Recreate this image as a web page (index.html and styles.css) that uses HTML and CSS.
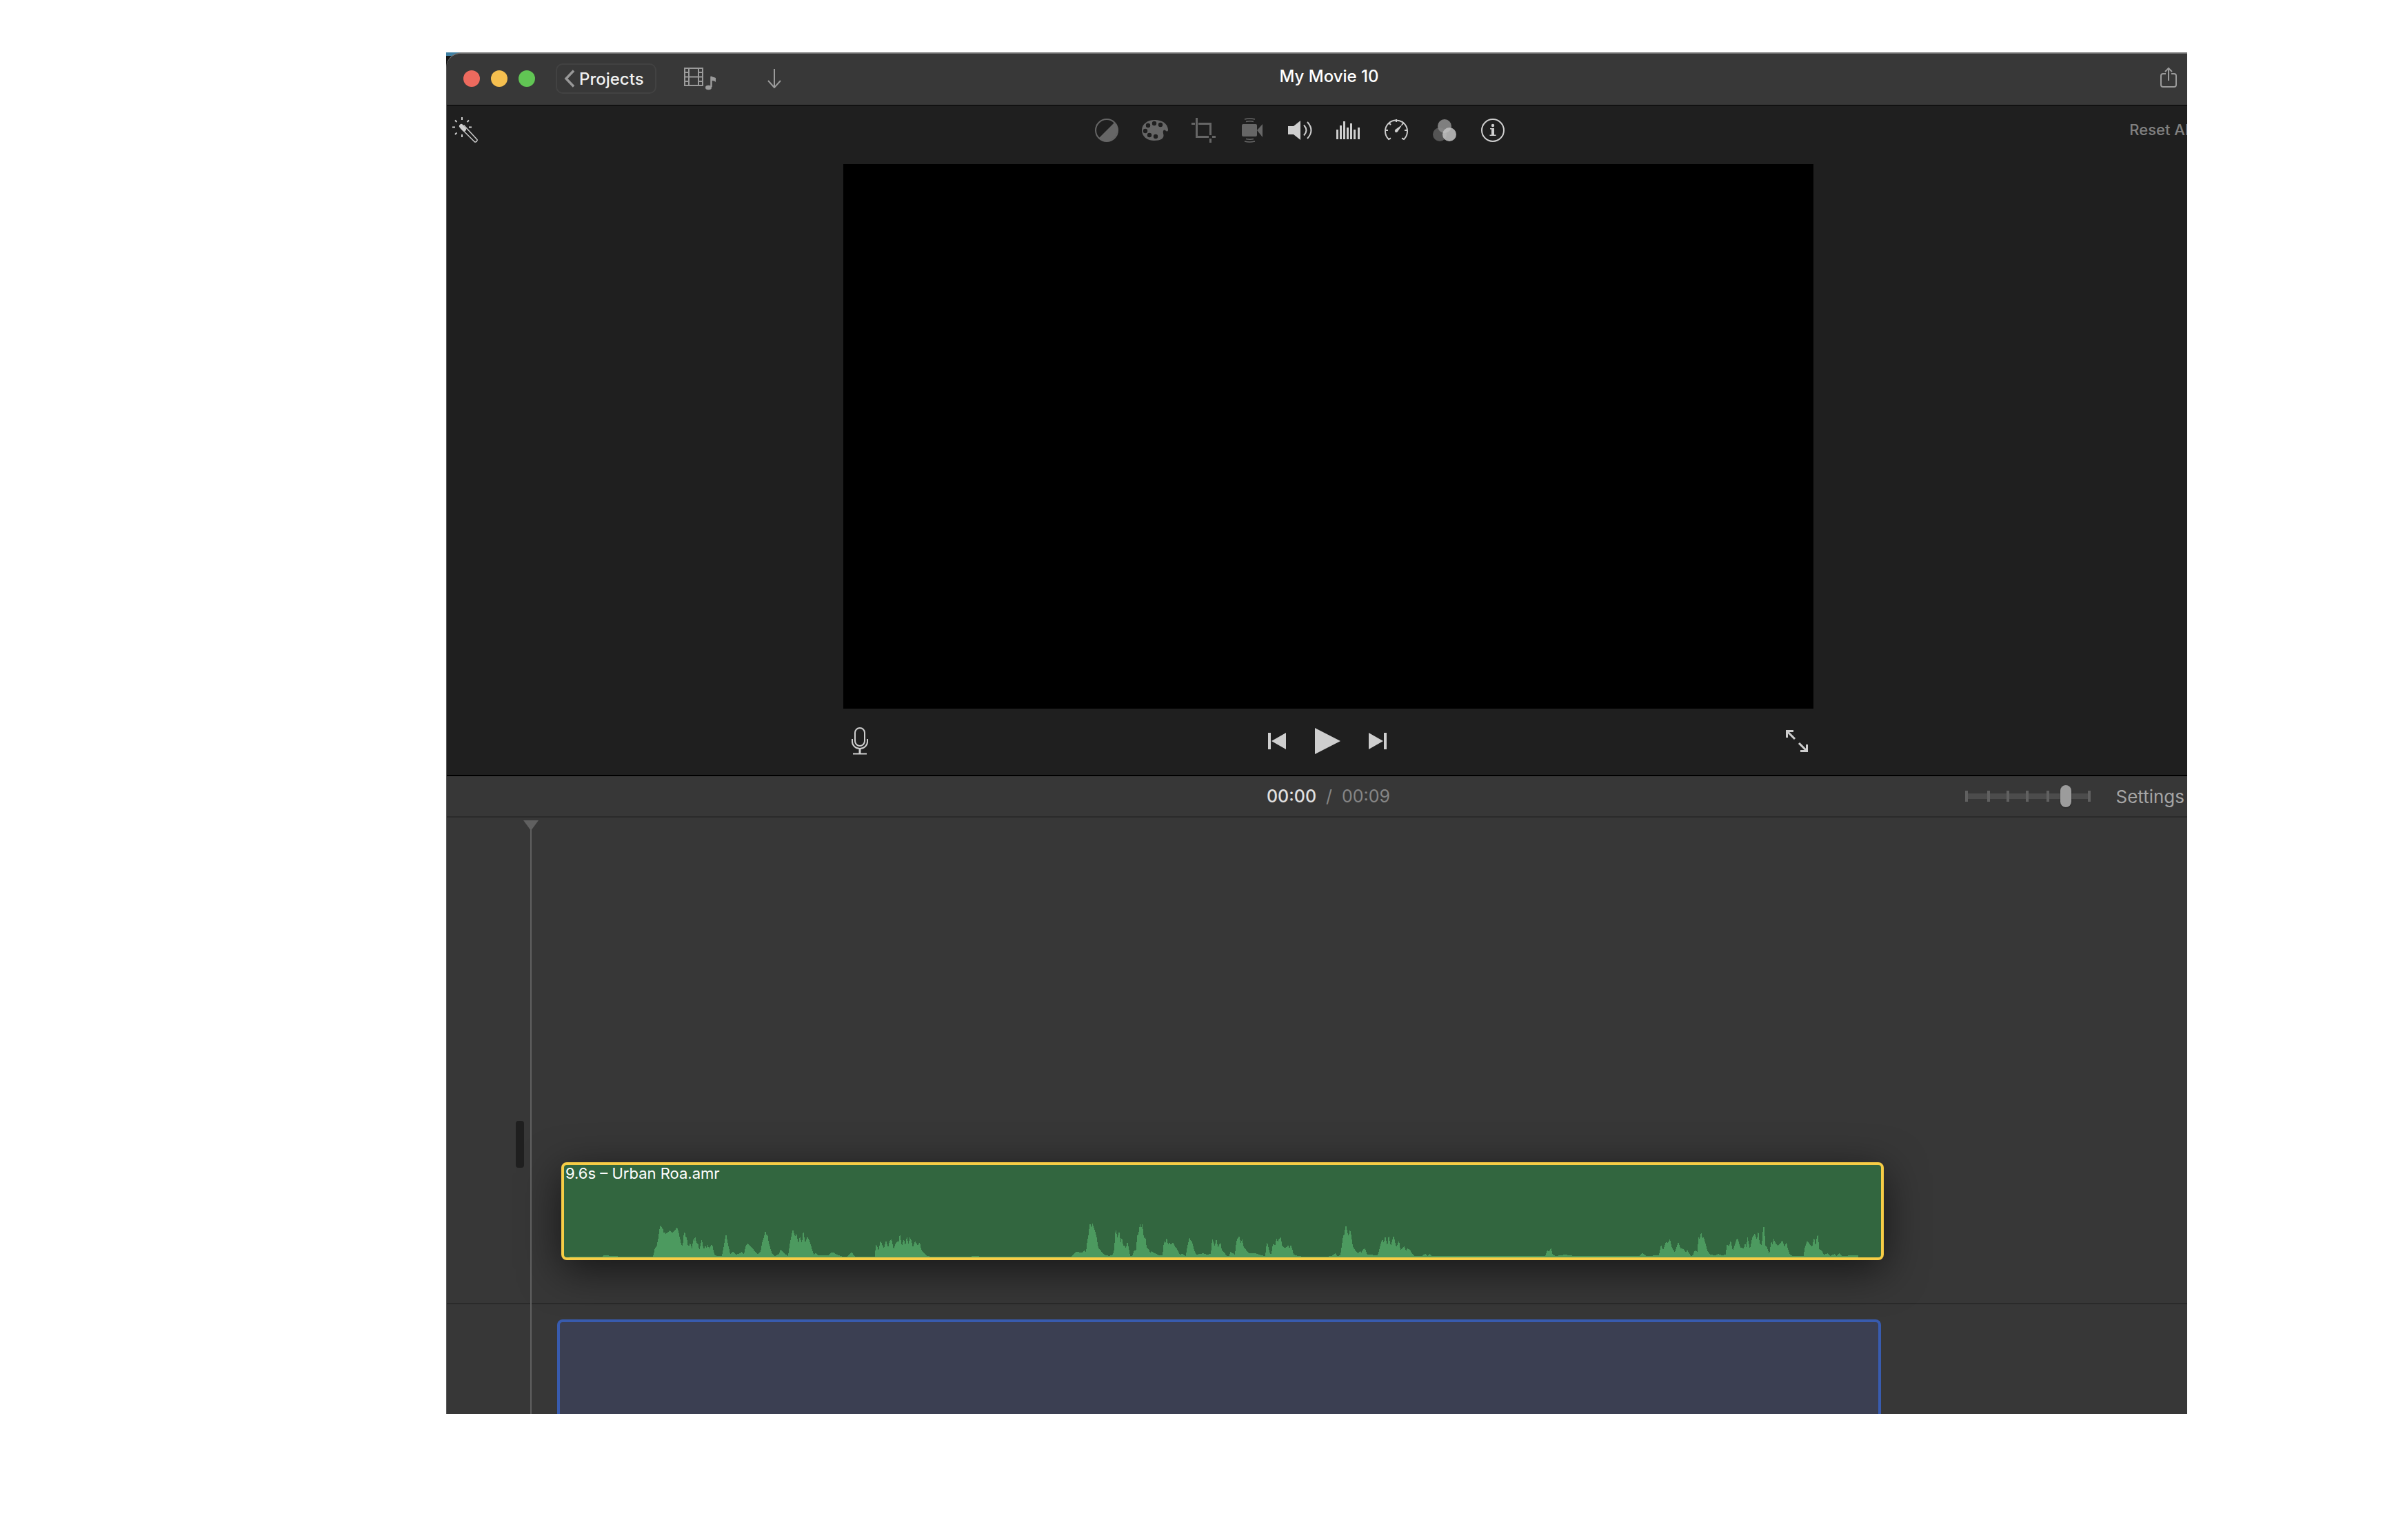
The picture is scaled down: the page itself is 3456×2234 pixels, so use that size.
FILE: index.html
```
<!DOCTYPE html>
<html lang="en">
<head>
  <meta charset="UTF-8" />
  <meta name="viewport" content="width=device-width, initial-scale=1.0"/>
  <title>My Movie 10</title>
  <link rel="stylesheet" href="styles.css">
</head>
<body>
  <div class="frame">
    <div class="app">

      <header class="titlebar">
        <div class="titlebar-left">
          <div class="lights">
            <button class="light close" aria-label="Close"></button>
            <button class="light minimize" aria-label="Minimize"></button>
            <button class="light zoom" aria-label="Zoom"></button>
          </div>
          <button class="projects-btn">
            <svg width="16" height="26" viewBox="0 0 16 26"><path d="M14 1.500L3 13l11 11.500" fill="none" stroke="#989898" stroke-width="3.500"/></svg>
            Projects
          </button>
          <button class="icon-btn media-btn" aria-label="Media">
            <svg width="48" height="34" viewBox="0 0 48 34" fill="none" stroke="#9b9b9b" stroke-width="2">
              <path d="M1 2h26v25H1zM7 2v25M21 2v25M7 14.500h14M1 8h6M1 14.500h6M1 21h6M21 8h6M21 14.500h6M21 21h6"/>
              <path d="M39.500 29V14.500" stroke-width="2.500"/>
              <path d="M38.500 13c2 2 5 1.500 7.500 3v6c-2-2-5-2-6-2z" fill="#9b9b9b" stroke="none"/>
              <ellipse cx="35.500" cy="30" rx="4.500" ry="3.200" fill="#9b9b9b" stroke="none"/>
            </svg>
          </button>
          <button class="icon-btn" aria-label="Import">
            <svg width="20" height="28" viewBox="0 0 20 28" fill="none" stroke="#9b9b9b" stroke-width="2"><path d="M10 0v26.500M1 17l9 10 9-10"/></svg>
          </button>
        </div>
        <h1 class="title">My Movie 10</h1>
        <div class="titlebar-right">
          <button class="icon-btn" aria-label="Share">
            <svg width="24" height="30" viewBox="0 0 24 30" fill="none" stroke="#9b9b9b" stroke-width="2"><path d="M8 10H4q-3 0-3 3v13q0 3 3 3h16q3 0 3-3V13q0-3-3-3h-4M12 20V2M7 7l5-5 5 5"/></svg>
          </button>
        </div>
      </header>

      <div class="adjust-bar">
        <button class="icon-btn wand" aria-label="Enhance">
          <svg width="38" height="38" viewBox="0 0 38 38" fill="none" stroke="#cecece" stroke-width="2">
            <path d="M14 0v4M0 14.500h4M24 14.500h4M14 25v4M4 4.500l2.500 2.500M24 4.500L21.500 7M4 25l2.500-2.500"/>
            <path d="M13 13l4 4.500" stroke-width="6" stroke-linecap="round"/>
            <path d="M12 15.500l20 20q2.500 1.500 4-1.500v-1.500L16.500 11.500" stroke-width="1.500"/>
          </svg>
        </button>
        <div class="adjust-tools">
          <button class="icon-btn" aria-label="Color balance">
            <svg width="36" height="36" viewBox="0 0 36 36"><circle cx="18" cy="18" r="16" fill="none" stroke="#666" stroke-width="2"/><path d="M29.500 6.500A16.300 16.300 0 0 1 6.500 29.500z" fill="#666"/></svg>
          </button>
          <button class="icon-btn" aria-label="Color correction">
            <svg width="36" height="36" viewBox="0 0 36 36">
              <path d="M18 3C7 3-1 9-1 18s8 15 18 15c9 0 14-3 13.500-8-.3-3-1.500-5 0-7 2-2 3.500 2 5 1.500 1.500 0 1.500-1 1.500-3C36 8 28 3 18 3z" fill="#666"/>
              <g fill="#1f1f1f"><circle cx="8" cy="11" r="3.200"/><circle cx="17" cy="8" r="3.200"/><circle cx="26" cy="10" r="3.200"/><circle cx="4" cy="19" r="3.200"/><circle cx="10" cy="25" r="3.200"/><circle cx="19" cy="27" r="3.200"/></g>
            </svg>
          </button>
          <button class="icon-btn" aria-label="Cropping">
            <svg width="36" height="36" viewBox="0 0 36 36" fill="none" stroke="#666" stroke-width="3"><path d="M1 8.500h5M8.500 0v27.500H26M11 8.500h17.500V25M28.500 30v6M28.500 24v1M31 27.500h5"/></svg>
          </button>
          <button class="icon-btn" aria-label="Stabilization">
            <svg width="36" height="36" viewBox="0 0 36 36"><rect x="4" y="9" width="22" height="18" rx="2" fill="#666"/><path d="M26 18l8-9v19z" fill="#666"/><path d="M8 2q7-2 15 0M10 5.500q6-1.500 11 0M10 30.500q6 1.500 11 0M8 34q7 2 15 0" fill="none" stroke="#666" stroke-width="1.500"/></svg>
          </button>
          <button class="icon-btn" aria-label="Volume">
            <svg width="36" height="36" viewBox="0 0 36 36"><path d="M1 12h8l10-8v28L9 24H1z" fill="#cecece"/><path d="M24 10.500q7 7.500 0 15M29 6q11 12 0 24" fill="none" stroke="#cecece" stroke-width="2"/></svg>
          </button>
          <button class="icon-btn" aria-label="Noise reduction and equalizer">
            <svg width="36" height="36" viewBox="0 0 36 36" fill="none" stroke="#cecece" stroke-width="3"><path d="M2.500 17v14M7.500 11v20M12.500 5v26M17.500 14v17M22.500 8v23M27.500 17v14M33.500 14v17"/></svg>
          </button>
          <button class="icon-btn" aria-label="Speed">
            <svg width="36" height="36" viewBox="0 0 36 36" fill="none" stroke="#cecece" stroke-width="2"><path d="M10 29.500l-3 1.500A16 16 0 1 1 29 31l-3-1.500"/><path d="M18 2v4M2 18h4M30 18h4M7 7l3 3M29 7l-3 3"/><path d="M27 9.500L20 20q-2 2-3.500.5t0-3.500z" fill="#cecece" stroke="none"/></svg>
          </button>
          <button class="icon-btn" aria-label="Video effect and audio effect">
            <svg width="36" height="36" viewBox="0 0 36 36"><circle cx="11" cy="24" r="10" fill="#555"/><circle cx="18" cy="12" r="10" fill="#8a8a8a" fill-opacity=".9"/><circle cx="25" cy="24" r="10" fill="#c4c4c4" fill-opacity=".85"/></svg>
          </button>
          <button class="icon-btn" aria-label="Clip information">
            <svg width="36" height="36" viewBox="0 0 36 36"><circle cx="18" cy="18" r="16" fill="none" stroke="#cecece" stroke-width="2"/><circle cx="18" cy="11" r="2.200" fill="#cecece"/><path d="M14 15h6v9.500h2.500V26h-9v-1.500H16v-8h-2z" fill="#cecece"/></svg>
          </button>
        </div>
        <button class="reset-btn">Reset All</button>
      </div>

      <section class="viewer">
        <div class="screen"></div>
        <div class="transport">
          <button class="icon-btn" aria-label="Record voiceover">
            <svg width="24" height="40" viewBox="0 0 24 40" fill="none" stroke="#cecece" stroke-width="2"><rect x="5" y="1" width="14" height="26" rx="7"/><path d="M1 17v4a11 10 0 0 0 22 0v-4"/><path d="M12 31v7" stroke-width="3"/><path d="M2 38.500h20"/></svg>
          </button>
          <div class="playback">
            <button class="icon-btn" aria-label="Previous">
              <svg width="26" height="24" viewBox="0 0 26 24" fill="#cecece"><path d="M0 0h4v24H0zM26 0v24L5 12z"/></svg>
            </button>
            <button class="icon-btn" aria-label="Play">
              <svg width="38" height="38" viewBox="0 0 38 38" fill="#cecece"><path d="M1 0l37 19L1 38z"/></svg>
            </button>
            <button class="icon-btn" aria-label="Next">
              <svg width="26" height="24" viewBox="0 0 26 24" fill="#cecece"><path d="M22 0h4v24h-4zM0 0v24l21-12z"/></svg>
            </button>
          </div>
          <button class="icon-btn fullscreen" aria-label="Full screen">
            <svg width="32" height="32" viewBox="0 0 32 32" fill="none" stroke="#cecece" stroke-width="3"><path d="M11 1.500H1.500V11M2 2l11 11M21 30.500h9.500V21M30 30L19 19"/></svg>
          </button>
        </div>
      </section>

      <div class="timebar">
        <div class="time"><span class="current">00:00</span><span>/</span><span>00:09</span></div>
        <div class="timebar-right">
          <div class="zoom-slider">
            <svg width="182" height="16" viewBox="0 0 182 16" fill="#606060"><path fill="#4c4c4c" d="M0 4h182v8H0z"/><path d="M0 0h4v16H0zM32 0h4v16h-4zM60 0h4v16h-4zM88 0h4v16h-4zM118 0h4v16h-4zM178 0h4v16h-4z"/></svg>
            <input type="range" min="0" max="100" value="83" aria-label="Timeline zoom" />
          </div>
          <button class="settings-btn">Settings</button>
        </div>
      </div>

      <main class="timeline">
        <div class="video-track">
          <div class="audio-clip">
            <span class="clip-name">9.6s – Urban Roa.amr</span>
            <svg class="wave" viewBox="0 -4 1910 52" preserveAspectRatio="none" shape-rendering="crispEdges">
              <path fill="#4c9a5f" d="M8 48V47H55L57 45L72 46L83 47H129L130 44L132 34L134 33L136 24L137 18L139 3L141 2L142 6L144 8L145 16L146 9L147 14L150 12L153 9L155 11L157 13L160 9L162 7L164 4L166 11L168 20L170 29L172 32L174 11L176 14L177 22L178 16L179 29L181 32L183 27L186 36L187 21L189 25L190 16L192 27L195 29L196 38L200 21L201 31L203 36L205 31L207 35L209 29L210 36L214 29L216 33L217 40L219 45L223 46H229L231 36L233 24L235 13L237 25L239 34L241 43L245 40L249 44L255 42L257 40L261 44L263 33L266 28L270 32L274 35L277 40L281 43L285 40L287 28L290 19L292 9L294 17L295 13L297 27L299 34L302 43L306 46L312 43L314 36L318 41L325 46L327 31L330 15L332 7L335 18L337 13L340 28L342 17L345 28L347 8L349 23L350 27L353 18L356 24L359 34L362 44L365 42L369 45H383L388 41H391L396 44L404 47H411L417 40L422 47H451L452 30L454 31L456 39L459 24L464 35L467 23L470 34L472 25L475 21L478 36L481 28L484 24L485 28L487 13L490 32L493 21L495 32L497 17L500 30L501 18L504 24L506 34L509 24L513 31L516 26L518 36L521 41L527 46L532 47H590L591 46H600L604 47H736L739 43L742 40L751 41L755 38L757 41L759 23L761 14L762 0H764L765 7L766 -3L768 3L770 9L773 21L774 30L776 36L778 37L781 42L786 45L791 46L796 44L798 36L799 18L800 6L802 16L803 21L804 12H806L807 28L809 19L811 31H813L815 35L817 25L819 34L821 46H824L827 38L830 37L831 16L833 15L835 0H836L837 8L838 0H839L840 14L842 22L843 17L845 34L849 38L850 42L852 39L857 42L863 45H868L869 36L870 24L872 28L874 19L876 30L878 26L880 30L883 26L886 32L889 36L893 44L897 43L902 46L903 37L907 19L909 24L911 26L914 38L917 44L927 42L932 44L938 43L939 34L940 20L944 33L945 23H947L948 34L952 26L954 38L957 40L961 46H965L966 40L970 42L973 44L975 26L977 19L978 21L979 16L982 29L983 20L986 34L989 37L993 42H1002L1011 45L1017 46L1019 27H1020L1021 31L1024 43H1026L1028 29L1032 30L1033 19L1035 26L1037 21L1040 19L1041 31L1044 34L1049 33L1050 29L1052 35L1054 30L1056 35L1058 44L1064 46L1073 47H1105L1113 46L1119 42L1121 46L1126 45L1128 30L1130 17L1132 14L1133 3H1135L1136 12L1138 17L1140 7L1142 18L1144 32L1147 37L1151 42L1154 39L1157 42L1158 37L1162 35L1165 44L1180 45L1182 38L1185 26L1187 22L1189 27L1191 16L1194 32L1196 15L1199 32L1203 16L1207 33L1211 24L1213 37L1219 32L1221 39L1223 35L1227 37L1230 43L1234 46H1244L1249 43L1253 46L1255 43L1259 46H1423L1426 38L1428 40L1432 34L1433 43L1438 46L1452 44L1465 46H1559L1564 42L1570 46L1588 45L1590 35L1591 30L1594 37L1598 26L1601 27L1604 21L1606 32L1611 41L1616 25L1619 35L1624 36L1627 41L1629 37L1634 46L1637 45L1640 38L1644 40L1645 18L1647 22L1649 11L1651 20L1653 19L1656 30L1658 38L1662 44L1670 45L1674 43L1679 45L1685 44L1686 30L1690 31L1692 23L1695 38L1698 30L1700 23L1702 20L1706 34L1711 35L1713 27L1715 35L1716 17L1720 36L1723 20L1727 13L1730 23L1732 8L1734 28L1737 31L1739 4H1741L1742 30L1745 34L1748 43L1751 24L1753 30L1754 20L1757 27L1760 31L1763 29L1767 23L1770 33L1773 26L1775 36L1778 44L1782 46H1798L1799 35L1803 24L1806 28L1810 33L1813 19L1815 32L1817 17L1819 15L1820 36L1824 38L1827 44L1833 42L1836 46L1843 43L1845 46L1849 42L1853 46L1871 45H1877V48Z"/>
            </svg>
          </div>
        </div>
        <div class="music-track">
          <div class="music-well"></div>
        </div>
        <div class="scroll-handle"></div>
        <div class="playhead"></div>
      </main>

    </div>
  </div>
</body>
</html>
```
FILE: styles.css
```
* {
  box-sizing: border-box;
}

body {
  margin: 0;
  padding: 76px 284px 183px 647px;
  min-height: 100vh;
  display: flex;
  background: #fff;
  color: #fff;
  font-family: Inter, "Liberation Sans", sans-serif;
  font-size: 24px;
}

button {
  padding: 0;
  border: none;
  background: none;
  color: inherit;
  font: inherit;
  white-space: nowrap;
}

svg {
  display: block;
}

/* the window runs a little past the right edge */
.frame {
  flex: 1;
  display: flex;
  overflow: hidden;
  background: linear-gradient(#3f80a3 5px, #161616 5px);
}

.app {
  flex: 0 0 calc(100% + 33px);
  display: flex;
  flex-direction: column;
  overflow: hidden;
  border-left: 1px solid #5a5a5a;
  border-top: 2px solid #707070;
  border-top-left-radius: 22px;
  background: #1f1f1f;
}

/* title bar */
.titlebar {
  height: 75px;
  display: grid;
  grid-template-columns: 1fr auto 1fr;
  align-items: center;
  padding: 0 48px 2px 24px;
  background: #383838;
  border-bottom: 1px solid #000;
}

.titlebar-left {
  display: flex;
  align-items: center;
}

.titlebar-right {
  display: flex;
  justify-content: flex-end;
  padding-bottom: 4px;
}

.lights {
  display: flex;
  gap: 16px;
  margin-right: 30px;
}

.light {
  width: 24px;
  height: 24px;
  border-radius: 50%;
}

.close {
  background: #ed6a5e;
}

.minimize {
  background: #f5bf4f;
}

.zoom {
  background: #61c554;
}

.projects-btn {
  display: flex;
  align-items: center;
  gap: 6px;
  width: 146px;
  height: 44px;
  padding-left: 10px;
  margin-right: 40px;
  border: 2px solid #424242;
  border-radius: 10px;
  color: #f0f0f0;
  font-size: 24px;
  font-weight: 500;
}

.media-btn {
  margin-right: 73px;
}

.title {
  margin: 0 0 0 26px;
  padding-bottom: 8px;
  font-size: 24px;
  font-weight: 500;
}

/* adjustment tools */
.adjust-bar {
  height: 85px;
  display: grid;
  grid-template-columns: 1fr auto 1fr;
  align-items: center;
  padding: 0 25px 14px 8px;
}

.adjust-tools {
  display: flex;
  gap: 34px;
  margin-right: 66px;
}

.adjust-tools svg {
  overflow: visible;
}

.reset-btn {
  justify-self: end;
  padding-bottom: 2px;
  color: #808080;
  font-size: 22px;
  font-weight: 500;
}

/* viewer */
.viewer {
  width: 55%;
  margin: 0 auto;
}

.screen {
  aspect-ratio: 1406 / 790;
  background: #000;
}

.transport {
  height: 96px;
  display: grid;
  grid-template-columns: 1fr auto 1fr;
  align-items: center;
  padding: 0 8px 2px 12px;
}

.playback {
  display: flex;
  align-items: center;
  gap: 41px;
  margin-right: 8px;
}

.fullscreen {
  justify-self: end;
}

/* time and zoom */
.timebar {
  height: 62px;
  display: grid;
  grid-template-columns: 1fr auto 1fr;
  align-items: center;
  background: #373737;
  border-top: 2px solid #000;
  border-bottom: 2px solid #2a2a2a;
}

.time {
  grid-column: 2;
  display: flex;
  gap: 14px;
  color: #868686;
  font-size: 25px;
}

.current {
  color: #e0e0e0;
  font-weight: 500;
}

.timebar-right {
  display: flex;
  align-items: center;
  justify-content: flex-end;
  gap: 36px;
  padding-right: 37px;
}

.zoom-slider {
  display: grid;
  align-items: center;
}

.zoom-slider svg,
.zoom-slider input {
  grid-area: 1 / 1;
}

.zoom-slider input {
  -webkit-appearance: none;
  appearance: none;
  width: 182px;
  height: 32px;
  margin: 0;
  background: transparent;
}

.zoom-slider input::-webkit-slider-thumb {
  -webkit-appearance: none;
  width: 16px;
  height: 32px;
  border-radius: 8px;
  background: #9c9c9c;
  box-shadow: 0 1px 2px rgba(0, 0, 0, 0.4);
}

.settings-btn {
  color: #a5a5a5;
  font-size: 26px;
}

/* timeline */
.timeline {
  flex: 1;
  display: flex;
  flex-direction: column;
  position: relative;
  background: #373737;
}

.video-track {
  padding: 500px 473px 62px 166px;
  border-bottom: 2px solid #2a2a2a;
}

.music-track {
  flex: 1;
  display: flex;
  padding: 22px 477px 0 160px;
}

.audio-clip {
  height: 142px;
  display: flex;
  flex-direction: column;
  justify-content: space-between;
  border: 4px solid #f7cd46;
  border-radius: 8px;
  background: #32663f;
  box-shadow: 0 14px 60px rgba(0, 0, 0, 0.6);
}

.clip-name {
  padding-left: 2px;
  font-size: 22px;
  line-height: 24px;
}

.wave {
  width: 100%;
  height: 52px;
}

.music-well {
  flex: 1;
  border: 4px solid #385bae;
  border-bottom: none;
  border-radius: 8px 8px 0 0;
  background: #3b3f52;
}

.scroll-handle {
  position: absolute;
  top: 440px;
  left: 100px;
  width: 12px;
  height: 68px;
  border-radius: 4px;
  background: #1f1f1f;
}

.playhead {
  position: absolute;
  top: 4px;
  bottom: 0;
  left: 121px;
  width: 2px;
  background: #606060;
}

.playhead::before {
  content: "";
  position: absolute;
  left: -10px;
  border: 11px solid transparent;
  border-top: 15px solid #606060;
  border-bottom: none;
}
```
